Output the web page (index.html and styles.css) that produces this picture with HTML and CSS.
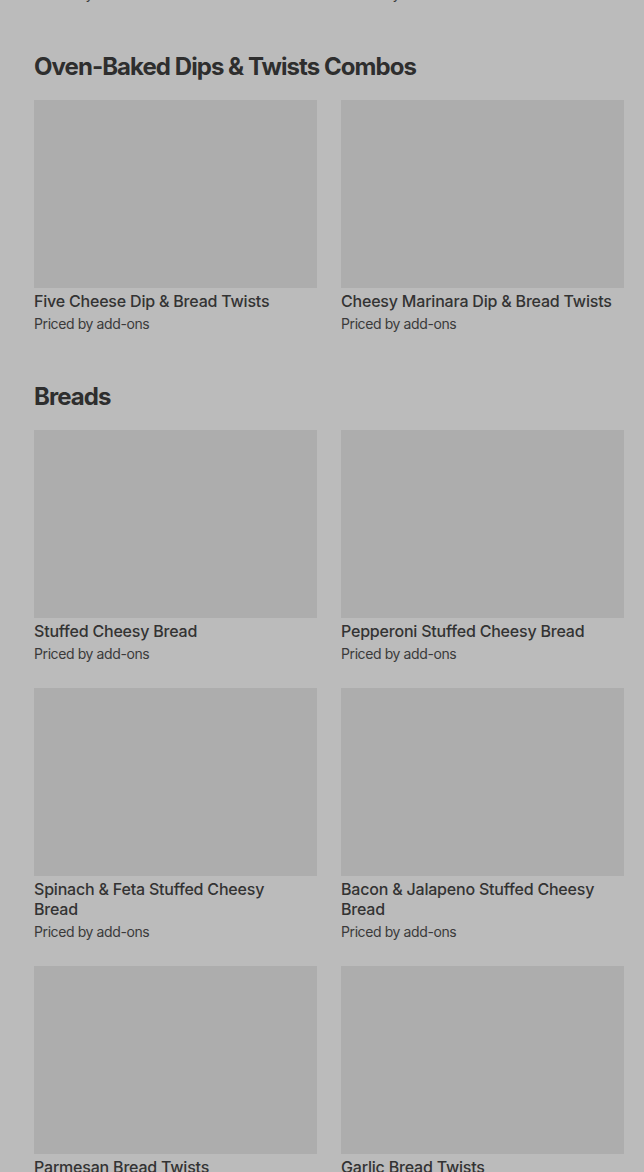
FILE: index.html
```html
<!DOCTYPE html>
<html lang="en">
<head>
  <meta charset="UTF-8">
  <title>Menu</title>
  <meta name="viewport" content="width=device-width, initial-scale=1.0"/>
  <link rel="stylesheet" href="styles.css">
</head>
<body>

<div id="menu">
  <!-- tail of the previous section, scrolled mostly out of view -->
  <div class="tail">
    <div class="price">Priced by add-ons</div>
    <div class="price">Priced by add-ons</div>
  </div>

  <section class="category">
    <h2>Oven-Baked Dips &amp; Twists Combos</h2>
    <div class="grid">
      <div class="item">
        <div class="thumb"></div>
        <div class="name">Five Cheese Dip &amp; Bread Twists</div>
        <div class="price">Priced by add-ons</div>
      </div>
      <div class="item">
        <div class="thumb"></div>
        <div class="name">Cheesy Marinara Dip &amp; Bread Twists</div>
        <div class="price">Priced by add-ons</div>
      </div>
    </div>
  </section>

  <section class="category">
    <h2>Breads</h2>
    <div class="grid">
      <div class="item">
        <div class="thumb"></div>
        <div class="name">Stuffed Cheesy Bread</div>
        <div class="price">Priced by add-ons</div>
      </div>
      <div class="item">
        <div class="thumb"></div>
        <div class="name">Pepperoni Stuffed Cheesy Bread</div>
        <div class="price">Priced by add-ons</div>
      </div>
      <div class="item">
        <div class="thumb"></div>
        <div class="name">Spinach &amp; Feta Stuffed Cheesy Bread</div>
        <div class="price">Priced by add-ons</div>
      </div>
      <div class="item">
        <div class="thumb"></div>
        <div class="name">Bacon &amp; Jalapeno Stuffed Cheesy Bread</div>
        <div class="price">Priced by add-ons</div>
      </div>
      <div class="item">
        <div class="thumb"></div>
        <div class="name">Parmesan Bread Twists</div>
        <div class="price">Priced by add-ons</div>
      </div>
      <div class="item">
        <div class="thumb"></div>
        <div class="name">Garlic Bread Twists</div>
        <div class="price">Priced by add-ons</div>
      </div>
    </div>
  </section>
</div>

</body>
</html>
```

FILE: styles.css
```css
body {
  margin: 0;
  font-family: Inter, "Noto Sans", sans-serif;
  background: #bbbbbb;
  color: #333333;
  overflow: hidden;
}
#menu {
  padding: 0 20px 0 34px;
}
.tail {
  display: grid;
  grid-template-columns: 1fr 1fr;
  column-gap: 24px;
  margin-top: -19px;
}
.category {
  margin-top: 47px;
}
.category h2 {
  margin: 0 0 17px;
  font-size: 24px;
  line-height: 32px;
  font-weight: 700;
  letter-spacing: -0.95px;
  color: #2e2e2e;
}
.grid {
  display: grid;
  grid-template-columns: 1fr 1fr;
  column-gap: 24px;
  row-gap: 24px;
}
.thumb {
  height: 188px;
  background: #adadad;
}
.name {
  margin-top: 3px;
  padding-right: 10px;
  font-size: 16px;
  line-height: 20px;
  font-weight: 500;
  letter-spacing: -0.2px;
}
.price {
  margin-top: 3px;
  font-size: 14px;
  line-height: 20px;
  letter-spacing: -0.4px;
  color: #3a3a3a;
}
```
